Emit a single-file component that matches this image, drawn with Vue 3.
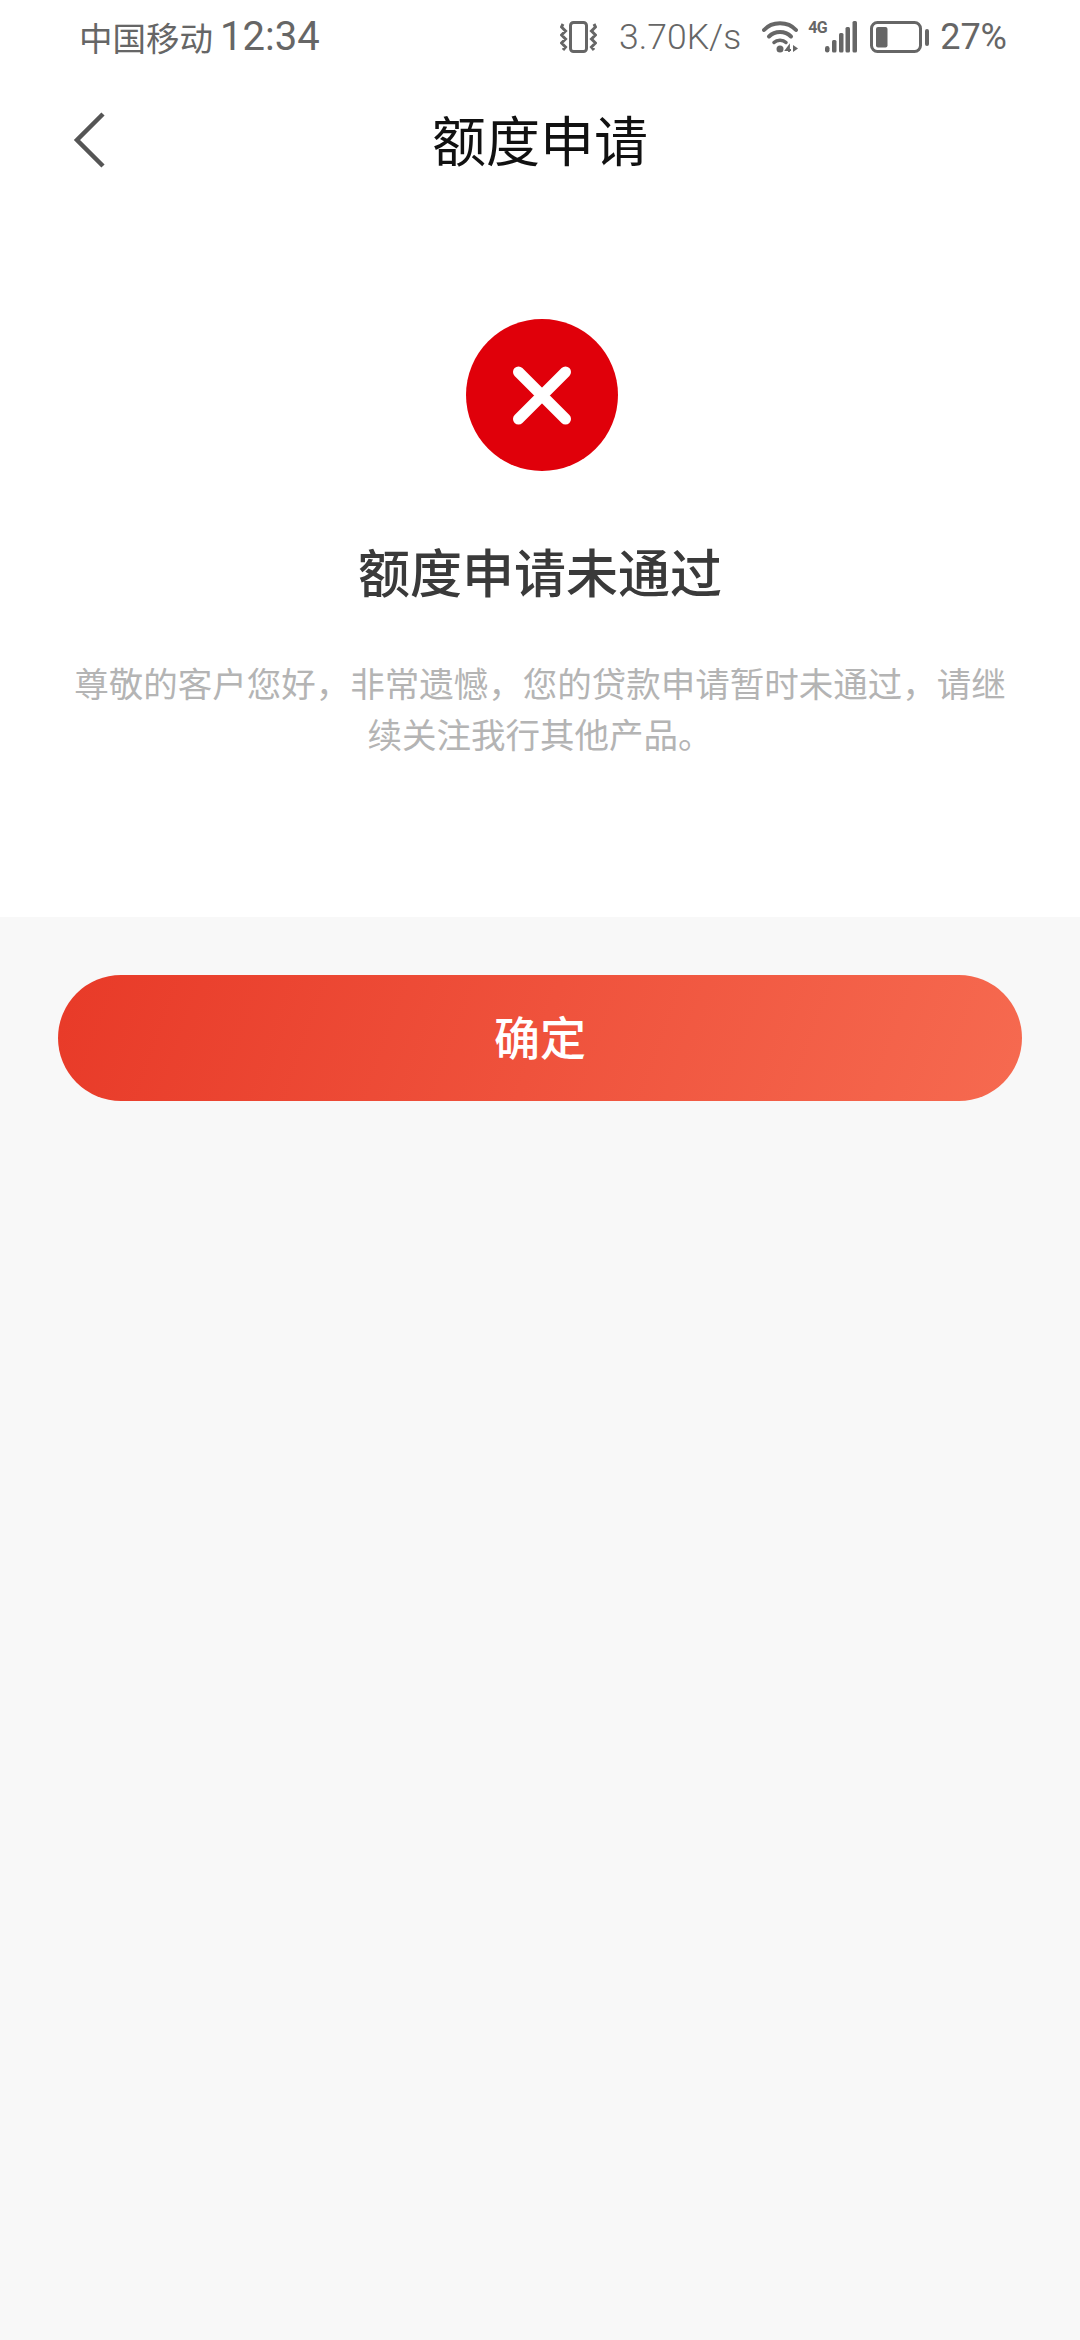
<script setup>
</script>

<template>
  <div class="page">
    <header class="status">
      <div class="left">
        <span class="carrier">中国移动</span>
        <span class="time">12:34</span>
      </div>
      <div class="right">
        <svg class="vib" width="37" height="32" viewBox="0 0 37 32" fill="none" stroke="#666">
          <rect x="10.5" y="1.5" width="16" height="29" rx="3" stroke-width="3" />
          <path d="M3 3 L1.5 6 L5.5 10 L1.5 14 L5.5 18 L1.5 22 L5.5 26 L3 29 M34 3 L35.5 6 L31.5 10 L35.5 14 L31.5 18 L35.5 22 L31.5 26 L34 29" stroke-width="3" />
        </svg>
        <span class="speed">3.70K/s</span>
        <svg class="wifi" width="36" height="32" viewBox="0 0 36 32" fill="none" stroke="#666">
          <path d="M2 9 C 10 0, 26 0, 34 9" stroke-width="4" stroke-linecap="round" />
          <path d="M7 15.5 C 13 9.5, 23 9.5, 29 15.5" stroke-width="4" stroke-linecap="round" />
          <path d="M12 21.5 C 15 18.5, 21 18.5, 24 21.5" stroke-width="3.5" stroke-linecap="round" />
          <circle cx="18" cy="28" r="3.5" fill="#666" stroke="none" />
          <path d="M27 31 V25 L24 29 H29" stroke-width="1.8" />
          <path d="M31 24 V31 L36 27.5 Z" fill="#666" stroke="none" />
        </svg>
        <div class="signal">
          <span class="net">4G</span>
          <svg width="32" height="32" viewBox="0 0 32 32" fill="#666">
            <rect x="0" y="25" width="4.5" height="6.500" rx="2.200" />
            <rect x="7" y="19" width="4.5" height="12.500" rx="1.500" />
            <rect x="14" y="12" width="4.5" height="19.500" rx="1.500" />
            <rect x="20.500" y="6" width="4.5" height="25.500" rx="1.500" />
            <rect x="27.500" y="0" width="4.5" height="31.500" rx="1.500" />
          </svg>
        </div>
        <svg class="battery" width="59" height="32" viewBox="0 0 59 32" fill="none">
          <rect x="1.5" y="1.5" width="49" height="29" rx="6" stroke="#666" stroke-width="3" />
          <rect x="6" y="6" width="11.5" height="20.5" rx="2" fill="#666" />
          <rect x="55" y="8" width="4" height="17" rx="2" fill="#666" />
        </svg>
        <span class="pct">27%</span>
      </div>
    </header>

    <nav class="nav">
      <svg class="back" width="34" height="58" viewBox="0 0 34 58" fill="none">
        <path d="M30 3 L4 29 L30 55" stroke="#555" stroke-width="4.5" />
      </svg>
      <h1 class="title">额度申请</h1>
    </nav>

    <section class="result">
      <div class="icon">
        <svg width="152" height="152" viewBox="0 0 152 152">
          <circle cx="76" cy="76" r="76" fill="#e0000a" />
          <path d="M52.500 53 L99.500 100 M99.500 53 L52.500 100" stroke="#fff" stroke-width="11" stroke-linecap="round" />
        </svg>
      </div>
      <h2 class="headline">额度申请未通过</h2>
      <p class="desc">尊敬的客户您好，非常遗憾，您的贷款申请暂时未通过，请继续关注我行其他产品。</p>
    </section>

    <section class="actions">
      <button class="confirm">确定</button>
    </section>
  </div>
</template>

<style>
html, body { margin: 0; background: #f8f8f8; }
</style>

<style scoped>
.page {
  width: 1080px;
  height: 2340px;
  background: #f8f8f8;
  font-family: "Noto Sans CJK SC", "Noto Sans", sans-serif;
  display: flex;
  flex-direction: column;
  overflow: hidden;
}
.status {
  height: 74px;
  box-sizing: border-box;
  padding: 0 73px 0 79px;
  background: #fff;
  display: flex;
  align-items: center;
  justify-content: space-between;
  color: #666;
}
.left { display: flex; align-items: center; gap: 7px; }
.carrier { font-size: 33.5px; line-height: 40px; }
.time { font-family: Roboto, sans-serif; font-size: 40px; line-height: 40px; font-weight: 400; }
.right { display: flex; align-items: center; }
.speed { font-family: Roboto, sans-serif; font-size: 35.5px; font-weight: 300; margin: 0 21px 0 22px; }
.signal { display: flex; align-items: flex-start; position: relative; margin-left: 10px; width: 49px; justify-content: flex-end; }
.net { position: absolute; left: 0; top: -2px; font-family: Roboto, sans-serif; font-size: 16px; line-height: 18px; font-weight: 700; letter-spacing: -0.5px; }
.battery { margin-left: 13px; }
.pct { font-family: Roboto, sans-serif; font-size: 36px; margin-left: 11px; }
.nav {
  height: 134px;
  box-sizing: border-box;
  padding-bottom: 4px;
  background: #fff;
  display: flex;
  align-items: center;
  justify-content: center;
  position: relative;
}
.back { position: absolute; left: 73px; top: 37px; }
.title { margin: 0; font-size: 54px; font-weight: 400; color: #111; line-height: 130px; }
.result {
  height: 709px;
  box-sizing: border-box;
  background: #fff;
  padding: 111px 70px 0;
  display: flex;
  flex-direction: column;
  align-items: center;
}
.icon { height: 152px; line-height: 0; margin-left: 4px; }
.headline { margin: 65px 0 0; font-size: 52px; font-weight: 500; color: #3a3a3a; line-height: 70px; }
.desc { margin: 51px 0 0; font-size: 34.5px; line-height: 51px; color: #b4b4b4; text-align: center; width: 940px; }
.actions { padding: 58px 58px 0; }
.confirm {
  display: block;
  width: 964px;
  height: 126px;
  border: 0;
  border-radius: 63px;
  background: linear-gradient(110deg, #e83a28, #f66a50);
  color: #fff;
  font-family: inherit;
  font-size: 46px;
  font-weight: 500;
  padding: 0 0 6px;
}
</style>
